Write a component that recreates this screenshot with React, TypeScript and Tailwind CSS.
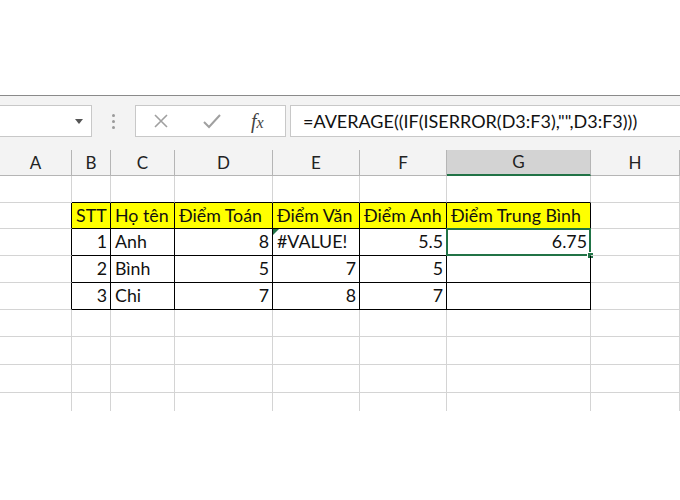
const cols = [
  { label: "A", w: "w-[72px]" },
  { label: "B", w: "w-[39px]" },
  { label: "C", w: "w-[64px]" },
  { label: "D", w: "w-[98px]" },
  { label: "E", w: "w-[87px]" },
  { label: "F", w: "w-[87px]" },
  { label: "G", w: "w-[144px]" },
  { label: "H", w: "w-[89px]" },
];

type Cell = { text: string; right?: boolean };

// rows 1..4 hold the table (B..G)
const table: Record<number, Cell[]> = {
  1: [
    { text: "STT" },
    { text: "Họ tên" },
    { text: "Điểm Toán" },
    { text: "Điểm Văn" },
    { text: "Điểm Anh" },
    { text: "Điểm Trung Bình" },
  ],
  2: [
    { text: "1", right: true },
    { text: "Anh" },
    { text: "8", right: true },
    { text: "#VALUE!" },
    { text: "5.5", right: true },
    { text: "6.75", right: true },
  ],
  3: [
    { text: "2", right: true },
    { text: "Bình" },
    { text: "5", right: true },
    { text: "7", right: true },
    { text: "5", right: true },
    { text: "", right: true },
  ],
  4: [
    { text: "3", right: true },
    { text: "Chi" },
    { text: "7", right: true },
    { text: "8", right: true },
    { text: "7", right: true },
    { text: "", right: true },
  ],
};

const rowHeights = ["h-[27px]", "h-[26px]", "h-[27px]", "h-[27px]", "h-[27px]", "h-[27px]", "h-[28px]", "h-[28px]", "h-[18px]"];

function GridCell({ r, c }: { r: number; c: number }) {
  const inTableRow = r >= 1 && r <= 4;
  const blackRight = inTableRow && c <= 6;
  const blackBottom = c >= 1 && c <= 6 && r <= 4;
  const isLast = r === rowHeights.length - 1;
  const cell = inTableRow && c >= 1 && c <= 6 ? table[r][c - 1] : null;
  const header = r === 1 && c >= 1 && c <= 6;
  const selected = r === 2 && c === 6;

  return (
    <div
      className={`relative ${cols[c].w} ${rowHeights[r]} shrink-0 border-r ${
        blackRight ? "border-r-black" : "border-r-[#d4d4d4]"
      } ${isLast ? "border-b-0" : "border-b"} ${blackBottom ? "border-b-black" : "border-b-[#d4d4d4]"} ${
        header ? "bg-[#ffff00]" : ""
      } flex items-center ${cell?.right ? "justify-end pr-[3px]" : "justify-start pl-[4px]"}`}
    >
      {cell && <span className="text-[17.8px] leading-none text-[#111] whitespace-nowrap">{cell.text}</span>}
      {r === 2 && c === 4 && (
        <span className="absolute left-0 top-0 w-0 h-0 border-t-[6px] border-r-[6px] border-t-[#217346] border-r-transparent" />
      )}
      {selected && (
        <>
          <span className="absolute -left-px -top-px -right-px -bottom-px border-2 border-[#217346]" />
          <span className="absolute -right-[4px] -bottom-[4px] w-[7px] h-[7px] bg-[#217346] border border-white" />
        </>
      )}
    </div>
  );
}

export default function App() {
  return (
    <div className="w-[680px] h-[500px] bg-white overflow-hidden font-['Lato','Liberation_Sans',sans-serif]">
      <div className="h-[95px]" />
      <div className="h-px bg-[#8a8a8a]" />

      {/* formula bar */}
      <div className="h-[54px] bg-[#f3f3f3] flex items-start pt-[9px]">
        <div className="w-[92px] h-[32px] bg-white border border-l-0 border-[#c8c8c8] flex items-center justify-end pr-[8px]">
          <span className="w-0 h-0 border-l-[4px] border-r-[4px] border-t-[5px] border-l-transparent border-r-transparent border-t-[#555]" />
        </div>
        <div className="w-[43px] h-[32px] flex flex-col items-center justify-center gap-[3px]">
          <span className="w-[3px] h-[3px] rounded-full bg-[#9a9a9a]" />
          <span className="w-[3px] h-[3px] rounded-full bg-[#9a9a9a]" />
          <span className="w-[3px] h-[3px] rounded-full bg-[#9a9a9a]" />
        </div>
        <div className="w-[151px] h-[32px] bg-white border border-[#c8c8c8] flex items-center">
          <svg className="ml-[17px]" width="16" height="16" viewBox="0 0 16 16">
            <path d="M2 2 L14 14 M14 2 L2 14" stroke="#a0a0a0" strokeWidth="1.6" fill="none" />
          </svg>
          <svg className="ml-[34px]" width="18" height="16" viewBox="0 0 18 16">
            <path d="M1 9 L6 14 L17 2" stroke="#a0a0a0" strokeWidth="2" fill="none" />
          </svg>
          <span className="ml-[30px] font-['Liberation_Serif',serif] italic text-[20px] leading-none text-[#444]">
            f<span className="text-[16px]">x</span>
          </span>
        </div>
        <div className="w-[4px]" />
        <div className="flex-1 h-[32px] bg-white border border-r-0 border-[#c8c8c8] flex items-center pl-[12px]">
          <span className="text-[18px] text-[#111] whitespace-nowrap">=AVERAGE((IF(ISERROR(D3:F3),"",D3:F3)))</span>
        </div>
      </div>

      {/* column headers */}
      <div className="flex h-[26px] bg-[#f3f3f3]">
        {cols.map((col) => (
          <div
            key={col.label}
            className={`${col.w} shrink-0 flex items-center justify-center border-r border-[#b5b5b5] ${
              col.label === "G" ? "bg-[#d3d3d3] border-b-2 border-b-[#217346]" : "border-b border-b-[#b5b5b5]"
            } text-[17px] text-[#222]`}
          >
            {col.label}
          </div>
        ))}
      </div>

      {/* grid */}
      <div className="flex flex-col">
        {rowHeights.map((_, r) => (
          <div key={r} className="flex">
            {cols.map((_, c) => (
              <GridCell key={c} r={r} c={c} />
            ))}
          </div>
        ))}
      </div>
    </div>
  );
}
